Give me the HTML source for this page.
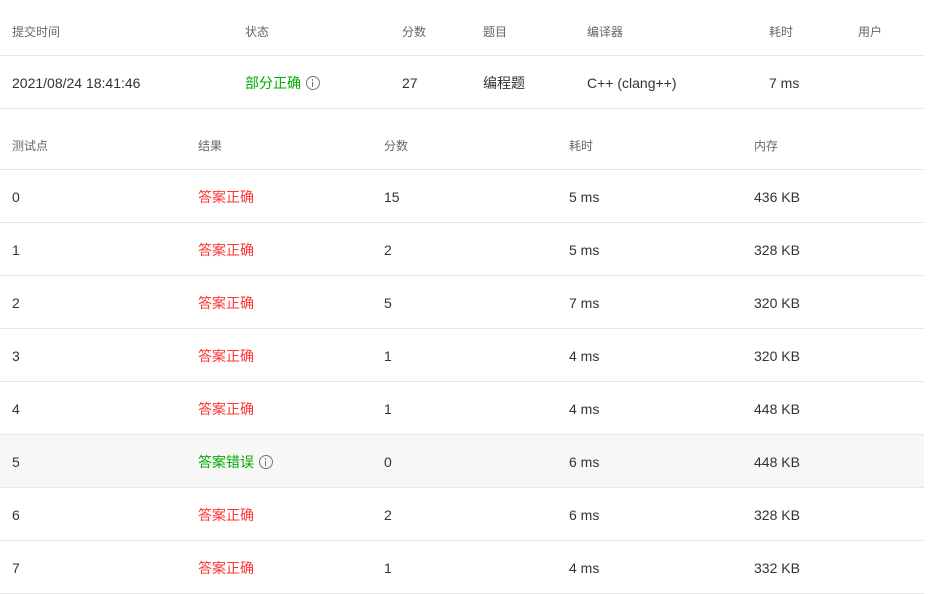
<!DOCTYPE html>
<html><head><meta charset="utf-8"><style>
body{margin:0;background:#fff;font-family:"Liberation Sans","Noto Sans CJK SC",sans-serif;color:#333;width:936px;height:584px;overflow:hidden;position:relative}
.r{position:absolute;left:0;width:924px;border-bottom:1px solid #e8e8e8}
.c{position:absolute;white-space:nowrap;font-size:14px;line-height:16px;height:16px}
.h{color:#666;font-size:12px}
.g{color:#0a0}.red{color:#f33}
.i{display:inline-block;width:14px;height:14px;border:1.6px solid #777;border-radius:50%;box-sizing:border-box;vertical-align:-2px;margin-left:5px;position:relative}
.i:before{content:"";position:absolute;left:4.6px;top:1.8px;width:1.8px;height:1.8px;background:#777}
.i:after{content:"";position:absolute;left:4.6px;top:4.5px;width:1.8px;height:5px;background:#777}
</style></head><body>
<div class="r" style="top:0;height:55px"></div>
<div class="r" style="top:56px;height:52px"></div>
<div class="r" style="top:109px;height:60px"></div>
<div class="c h" style="left:12px;top:24px">提交时间</div>
<div class="c h" style="left:245px;top:24px">状态</div>
<div class="c h" style="left:402px;top:24px">分数</div>
<div class="c h" style="left:483px;top:24px">题目</div>
<div class="c h" style="left:587px;top:24px">编译器</div>
<div class="c h" style="left:769px;top:24px">耗时</div>
<div class="c h" style="left:858px;top:24px">用户</div>
<div class="c" style="left:12px;top:75px">2021/08/24 18:41:46</div>
<div class="c g" style="left:245px;top:75px">部分正确<span class="i"></span></div>
<div class="c" style="left:402px;top:75px">27</div>
<div class="c" style="left:483px;top:75px">编程题</div>
<div class="c" style="left:587px;top:75px">C++ (clang++)</div>
<div class="c" style="left:769px;top:75px">7 ms</div>
<div class="c h" style="left:12px;top:138px">测试点</div>
<div class="c h" style="left:198px;top:138px">结果</div>
<div class="c h" style="left:384px;top:138px">分数</div>
<div class="c h" style="left:569px;top:138px">耗时</div>
<div class="c h" style="left:754px;top:138px">内存</div>
<div id="rows"></div>
<script>
var d=[[15,5,436],[2,5,328],[5,7,320],[1,4,320],[1,4,448],[0,6,448],[2,6,328],[1,4,332]];
var h="";
d.forEach(function(r,k){var t=170+k*53;
h+='<div class="r" style="top:'+t+'px;height:52px;'+(k==5?'background:#f7f7f7':'')+'"></div>';
var y=t+19;
h+='<div class="c" style="left:12px;top:'+y+'px">'+k+'</div>';
h+=k==5?'<div class="c g" style="left:198px;top:'+y+'px">答案错误<span class="i"></span></div>':'<div class="c red" style="left:198px;top:'+y+'px">答案正确</div>';
h+='<div class="c" style="left:384px;top:'+y+'px">'+r[0]+'</div>';
h+='<div class="c" style="left:569px;top:'+y+'px">'+r[1]+' ms</div>';
h+='<div class="c" style="left:754px;top:'+y+'px">'+r[2]+' KB</div>';});
document.getElementById("rows").innerHTML=h;
</script>
</body></html>
